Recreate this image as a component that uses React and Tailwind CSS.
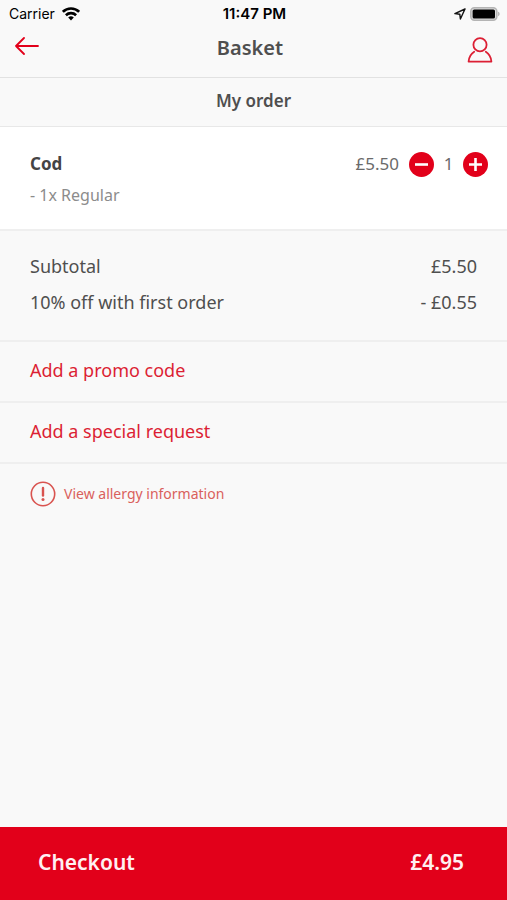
import React, { useState } from 'react';

const UNIT_PRICE = 5.5;
const DISCOUNT = 0.1;

const formatPrice = (value) => `£${value.toFixed(2)}`;

const WifiIcon = () => (
    <svg className="w-[18px] h-[14px]" viewBox="0 0 18 14" fill="none" stroke="#000" strokeWidth="2.6" aria-hidden="true">
        <path d="M0.9 4.8a11.6 11.6 0 0 1 16.2 0" />
        <path d="M3.9 8.2a7.3 7.3 0 0 1 10.2 0" />
        <path d="M9 13.4 6.2 10.6a4 4 0 0 1 5.6 0Z" fill="#000" stroke="none" />
    </svg>
);

const LocationIcon = () => (
    <svg className="w-3 h-3" viewBox="0 0 12 12" fill="none" stroke="#111" strokeWidth="1.4" strokeLinejoin="round" aria-hidden="true">
        <path d="M11 1 0.9 5.6 5.8 6.2 6.4 11Z" />
    </svg>
);

const BatteryIcon = () => (
    <svg className="w-[30px] h-[14px]" viewBox="0 0 30 14" aria-hidden="true">
        <rect x="0.8" y="0.8" width="26" height="12.4" rx="3.6" fill="#ddd" stroke="#b4b4b4" strokeWidth="1.6" />
        <rect x="2.6" y="2.4" width="22.4" height="9.2" rx="1.6" fill="#000" />
        <path d="M28.2 4.8c1.8.6 1.8 3.8 0 4.4Z" fill="#a8a8a8" />
    </svg>
);

const BackIcon = () => (
    <svg className="w-6 h-[18px]" viewBox="0 0 24 18" fill="none" stroke="#e2001a" strokeWidth="1.8" strokeLinecap="round" strokeLinejoin="round" aria-hidden="true">
        <path d="M23 9H1M9 1 1 9l8 8" />
    </svg>
);

const ProfileIcon = () => (
    <svg className="w-[26px] h-[26px]" viewBox="0 0 26 26" fill="none" stroke="#dc1f34" strokeWidth="1.8" strokeLinecap="round" strokeLinejoin="round" aria-hidden="true">
        <circle cx="13" cy="7.8" r="6.6" />
        <path d="M7.2 14.8C4 16.8 2 20.2 1.6 24.6h22.8c-.4-4.4-2.4-7.8-5.6-9.8" />
    </svg>
);

const AlertIcon = () => (
    <svg className="w-[26px] h-[26px]" viewBox="0 0 26 26" fill="none" stroke="#d9534f" strokeLinecap="round" aria-hidden="true">
        <circle cx="13" cy="13" r="11.7" strokeWidth="1.6" />
        <path d="M13 7v7.6" strokeWidth="2.4" />
        <circle cx="13" cy="18.6" r="1.5" fill="#d9534f" stroke="none" />
    </svg>
);

const QuantityButton = ({ label, path, onClick }) => (
    <button type="button" aria-label={label} onClick={onClick} className="flex h-[25px] w-[25px] items-center justify-center rounded-full bg-[#e2001a]">
        <svg className="w-[25px] h-[25px]" viewBox="0 0 25 25" fill="none" stroke="#fff" strokeWidth="2.6" aria-hidden="true">
            <path d={path} />
        </svg>
    </button>
);

const StatusBar = () => (
    <div className="grid h-7 grid-cols-3 items-center pl-[9px] pr-[7px] text-black">
        <div className="flex items-center gap-[7px] font-['Inter',sans-serif] text-sm">
            Carrier
            <WifiIcon />
        </div>
        <div className="text-center font-['Inter',sans-serif] text-[15px] font-semibold">11:47 PM</div>
        <div className="flex items-center justify-end gap-1">
            <LocationIcon />
            <BatteryIcon />
        </div>
    </div>
);

const SummaryRow = ({ label, value }) => (
    <div className="flex justify-between">
        <dt>{label}</dt>
        <dd>{value}</dd>
    </div>
);

const ActionRow = ({ children }) => (
    <button type="button" className="block w-full border-b-2 border-[#efefef] px-[30px] pb-[17px] pt-[15px] text-left text-lg leading-[27px] text-[#dc1f34]">
        {children}
    </button>
);

const App = () => {
    const [quantity, setQuantity] = useState(1);
    const subtotal = quantity * UNIT_PRICE;
    const discount = subtotal * DISCOUNT;

    return (
        <div className="flex min-h-screen flex-col bg-[#f9f9f9] font-['Noto_Sans',sans-serif] text-[#4f4f4f]">
            <StatusBar />
            <header className="flex h-[50px] items-start justify-between border-b border-[#e2e2e2] pl-[15px] pr-[14px]">
                <button type="button" aria-label="Back" className="flex h-9 w-6 items-center">
                    <BackIcon />
                </button>
                <h1 className="text-xl font-semibold leading-10">Basket</h1>
                <button type="button" aria-label="Profile" className="flex h-11 w-8 items-center justify-end">
                    <ProfileIcon />
                </button>
            </header>

            <main className="grow">
                <h2 className="border-b border-[#e8e8e8] pb-[2px] text-center text-[17px] font-semibold leading-[46px]">My order</h2>

                <section className="border-b-2 border-[#efefef] bg-white pb-[18px] pl-[30px] pr-[19px] pt-[22px]">
                    <div className="flex h-[30px] items-center">
                        <h3 className="grow text-[17px] font-bold text-[#444]">Cod</h3>
                        <span className="text-[17px] text-[#6a6a6a]">{formatPrice(UNIT_PRICE)}</span>
                        <div className="ml-[10px] flex items-center">
                            <QuantityButton label="Remove one" path="M6 12.5h13" onClick={() => setQuantity(Math.max(1, quantity - 1))} />
                            <span className="w-[29px] text-center text-[17px] text-[#6a6a6a]">{quantity}</span>
                            <QuantityButton label="Add one" path="M6 12.5h13M12.5 6v13" onClick={() => setQuantity(quantity + 1)} />
                        </div>
                    </div>
                    <p className="text-base leading-8 text-[#8c8c8c]">- 1x Regular</p>
                </section>

                <dl className="border-b-2 border-[#efefef] pb-5 px-[30px] pt-[17px] text-lg leading-9">
                    <SummaryRow label="Subtotal" value={formatPrice(subtotal)} />
                    <SummaryRow label="10% off with first order" value={`- ${formatPrice(discount)}`} />
                </dl>

                <ActionRow>Add a promo code</ActionRow>
                <ActionRow>Add a special request</ActionRow>

                <button type="button" className="flex items-center gap-2 px-[30px] py-[17px] text-sm text-[#d9605c]">
                    <AlertIcon />
                    View allergy information
                </button>
            </main>

            <button type="button" className="flex w-full items-center justify-between bg-[#e2001a] pb-[3px] pl-[38px] pr-[43px] text-[21px] font-semibold leading-[70px] text-[#fff0f1]">
                <span>Checkout</span>
                <span>{formatPrice(subtotal - discount)}</span>
            </button>
        </div>
    );
};

export default App;
